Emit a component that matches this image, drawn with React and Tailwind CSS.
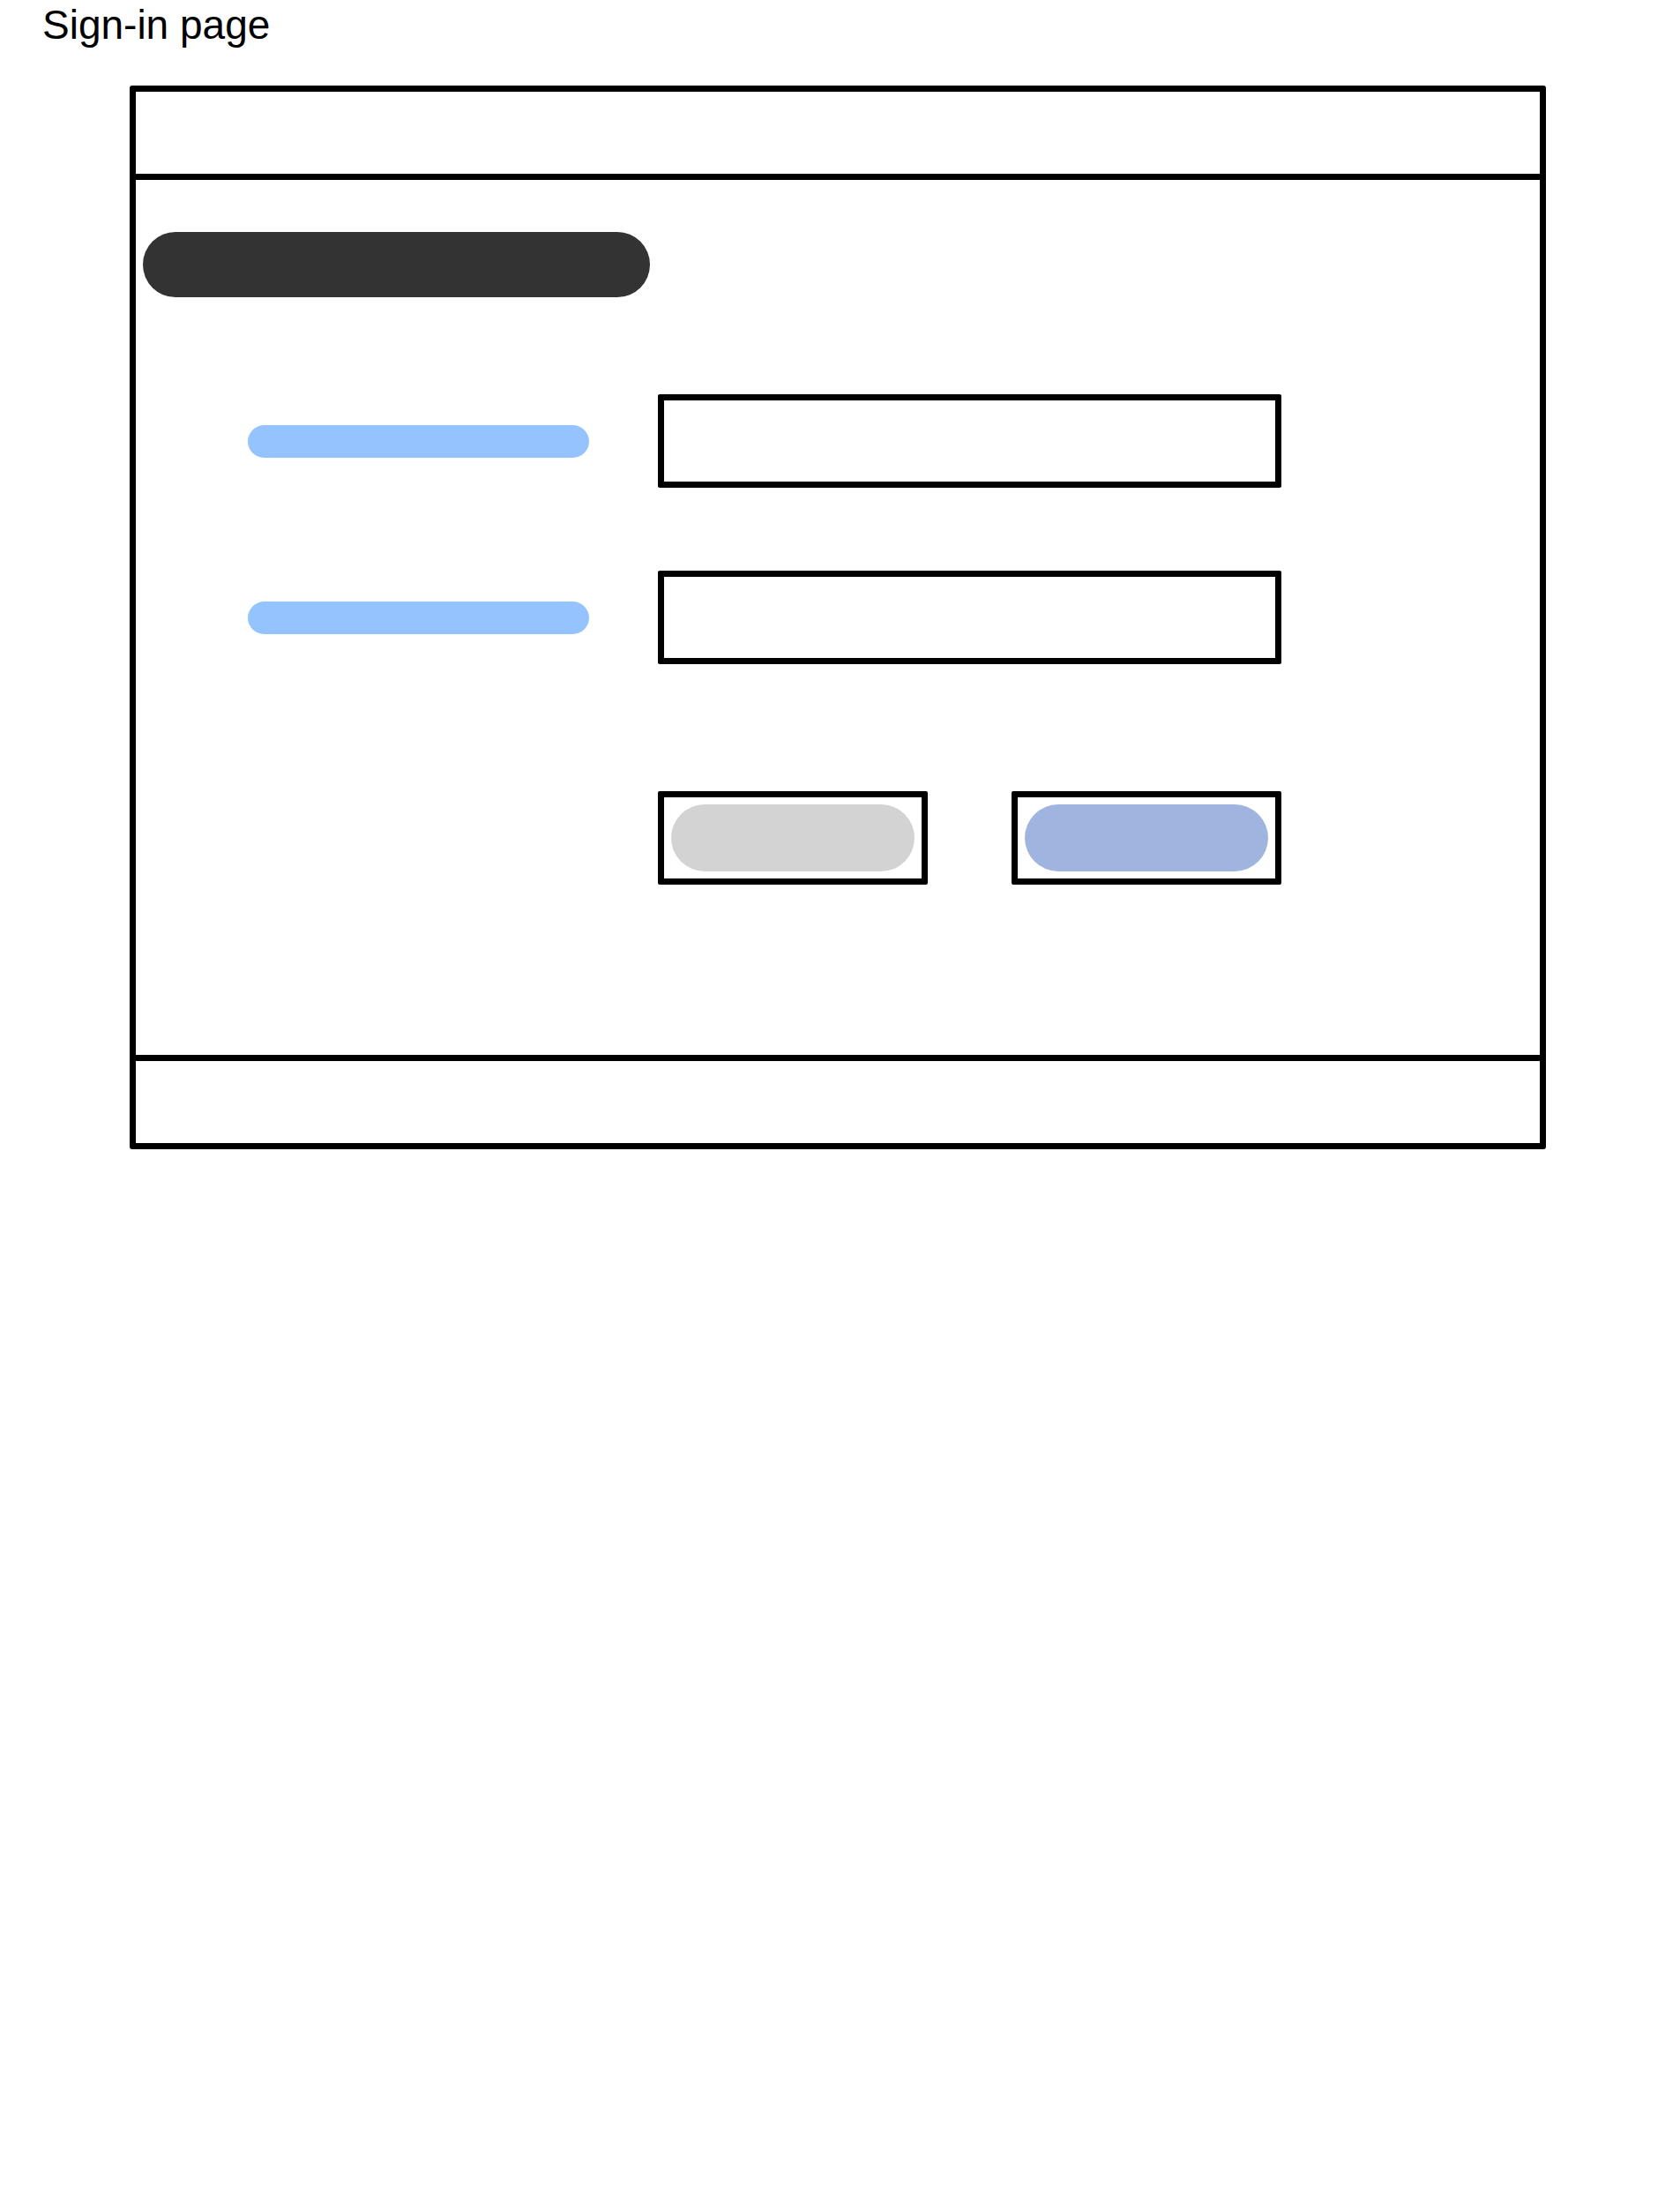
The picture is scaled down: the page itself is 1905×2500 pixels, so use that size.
import React from 'react';

const FIELDS = ['username', 'password'];

function FieldRow({ last }) {
  return (
    <div className={`flex items-center ${last ? '' : 'mb-[94px]'}`}>
      <div className="h-[37px] w-[387px] rounded-full bg-[#95c3fd]" />
      <div className="ml-[78px] h-[106px] w-[707px] rounded-[2px] border-[7px] border-black bg-white" />
    </div>
  );
}

function Button({ tone }) {
  return (
    <div className="flex h-[106px] w-[306px] rounded-[2px] border-[7px] border-black bg-white p-[8px]">
      <div className={`flex-1 rounded-full ${tone}`} />
    </div>
  );
}

export default function App() {
  return (
    <div className="min-h-[2500px] w-[1905px] bg-white text-black" style={{ fontFamily: '"Liberation Sans", Arial, sans-serif' }}>
      <h1 className="ml-[48px] pt-[5px] text-[46px] leading-none font-normal">Sign-in page</h1>

      {/* wireframe window */}
      <div className="ml-[147px] mt-[46px] flex h-[1206px] w-[1606px] flex-col rounded-[3px] border-[7px] border-black">
        <div className="h-[100px] border-b-[7px] border-black" />

        <div className="flex-1">
          <div className="ml-[8px] mt-[59px] h-[74px] w-[575px] rounded-full bg-[#333333]" />

          <div className="mt-[110px] pl-[127px]">
            {FIELDS.map((f, i) => (
              <FieldRow key={f} last={i === FIELDS.length - 1} />
            ))}

            <div className="ml-[465px] mt-[144px] flex w-[707px] justify-between">
              <Button tone="bg-[#d3d3d3]" />
              <Button tone="bg-[#a0b4e0]" />
            </div>
          </div>
        </div>

        <div className="h-[100px] border-t-[7px] border-black" />
      </div>
    </div>
  );
}
